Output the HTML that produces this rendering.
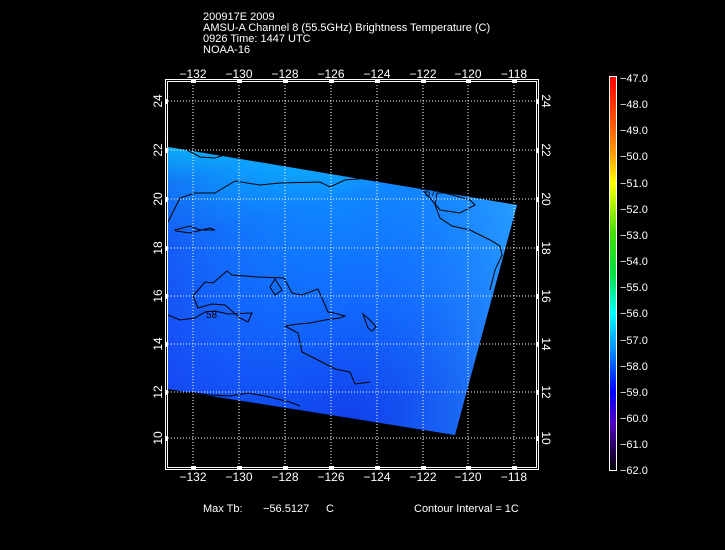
<!DOCTYPE html>
<html><head><meta charset="utf-8"><style>
html,body{margin:0;padding:0;background:#000;}
body{width:725px;height:550px;position:relative;overflow:hidden;font-family:"Liberation Sans",sans-serif;color:#fff;}
.t{position:absolute;font-size:11px;line-height:11px;white-space:pre;}
</style></head><body>
<div class="t" style="left:203px;top:12px">200917E 2009
AMSU-A Channel 8 (55.5GHz) Brightness Temperature (C)
0926 Time: 1447 UTC
NOAA-16</div>
<svg width="725" height="550" style="position:absolute;left:0;top:0" xmlns="http://www.w3.org/2000/svg">
<defs>
<linearGradient id="g1" x1="0" y1="0" x2="0.3" y2="1">
<stop offset="0" stop-color="#00f4ff"/>
<stop offset="0.12" stop-color="#08c0ff"/>
<stop offset="0.3" stop-color="#1088ff"/>
<stop offset="0.65" stop-color="#1268ff"/>
<stop offset="1" stop-color="#1240ec"/>
</linearGradient>
<linearGradient id="g2" x1="0" y1="0" x2="1" y2="0">
<stop offset="0" stop-color="#1a38ee" stop-opacity="0.55"/>
<stop offset="0.5" stop-color="#1070ff" stop-opacity="0"/>
<stop offset="1" stop-color="#30acff" stop-opacity="0.7"/>
</linearGradient>
<radialGradient id="g3" cx="0" cy="0" r="1">
<stop offset="0" stop-color="#00ffff" stop-opacity="0.9"/>
<stop offset="1" stop-color="#00ffff" stop-opacity="0"/>
</radialGradient>
<linearGradient id="cb" x1="0" y1="0" x2="0" y2="1">
<stop offset="0" stop-color="#ff0000"/>
<stop offset="0.13" stop-color="#ff6000"/>
<stop offset="0.2" stop-color="#ffa000"/>
<stop offset="0.27" stop-color="#ffff00"/>
<stop offset="0.4" stop-color="#40e000"/>
<stop offset="0.5" stop-color="#00e040"/>
<stop offset="0.6" stop-color="#00ffff"/>
<stop offset="0.73" stop-color="#0060ff"/>
<stop offset="0.8" stop-color="#0000ff"/>
<stop offset="0.88" stop-color="#5000c0"/>
<stop offset="1" stop-color="#000000"/>
</linearGradient>
<clipPath id="cp"><polygon points="168,147 517,205 455,435 168,389"/></clipPath>
</defs>
<polygon points="168,147 517,205 455,435 168,389" fill="url(#g1)"/>
<polygon points="168,147 517,205 455,435 168,389" fill="url(#g2)"/>
<g clip-path="url(#cp)"><ellipse cx="168" cy="147" rx="120" ry="50" fill="url(#g3)"/></g>
<g fill="none" stroke="#000" stroke-width="1">
<path d="M187,150 L200,157 L215,158 L227,154 L240,157 L245,153"/>
<path d="M168,222 L180,198 L195,193 L215,193 L235,181 L260,185 L280,183 L320,182 L330,187 L345,180 L370,178 L398,180 L420,187 L430,198 L440,210 L460,213 L475,205 L470,200 L445,193 L437,193 L435,205 L440,218 L452,226 L470,230 L490,240 L500,246 L502,255 L495,270 L490,290"/>
<path d="M175,230 L190,226 L200,230 L215,230 L210,228 L190,233 L176,231 Z"/>
<path d="M168,315 L180,320 L195,318 L205,312 L215,311 L228,314 L252,313 L248,322 L240,318 L225,305 L212,304 L198,308 L193,296 L205,282 L213,283 L227,271 L232,275 L258,277 L284,278 L292,293 L302,295 L318,289 L328,312 L334,313 L345,316 L340,318 L325,320 L310,323 L298,324 L285,326 L298,333 L302,352 L318,360 L335,369 L350,372 L355,384 L370,382"/>
<path d="M270,287 L275,279 L282,290 L275,295 Z"/>
<path d="M363,314 L370,320 L376,327 L372,331 L368,328 Z"/>
<path d="M189,392 L210,395 L230,396 L248,393 L265,396 L290,402 L300,406"/>
</g>
<g stroke="#fff" stroke-width="1" stroke-dasharray="1,2" fill="none">
<path d="M193,85V466M239,85V466M285,85V466M331,85V466M377,85V466M423,85V466M468,85V466M514,85V466"/>
<path d="M168,101H536M168,150H536M168,199H536M168,248H536M168,296H536M168,344H536M168,392H536M168,438H536"/>
</g>
<rect x="165.5" y="79.5" width="373" height="390" fill="none" stroke="#fff" stroke-width="1"/>
<rect x="167.5" y="81.5" width="369" height="386" fill="none" stroke="#fff" stroke-width="1"/>
<g fill="#fff">
<rect x="191" y="79" width="5" height="4"/><rect x="237" y="79" width="5" height="4"/><rect x="283" y="79" width="5" height="4"/><rect x="329" y="79" width="5" height="4"/><rect x="375" y="79" width="5" height="4"/><rect x="421" y="79" width="5" height="4"/><rect x="466" y="79" width="5" height="4"/><rect x="512" y="79" width="5" height="4"/>
<rect x="191" y="466" width="5" height="4"/><rect x="237" y="466" width="5" height="4"/><rect x="283" y="466" width="5" height="4"/><rect x="329" y="466" width="5" height="4"/><rect x="375" y="466" width="5" height="4"/><rect x="421" y="466" width="5" height="4"/><rect x="466" y="466" width="5" height="4"/><rect x="512" y="466" width="5" height="4"/>
<rect x="165" y="99" width="3" height="5"/><rect x="165" y="148" width="3" height="5"/><rect x="165" y="197" width="3" height="5"/><rect x="165" y="246" width="3" height="5"/><rect x="165" y="294" width="3" height="5"/><rect x="165" y="342" width="3" height="5"/><rect x="165" y="390" width="3" height="5"/><rect x="165" y="436" width="3" height="5"/>
<rect x="536" y="99" width="3" height="5"/><rect x="536" y="148" width="3" height="5"/><rect x="536" y="197" width="3" height="5"/><rect x="536" y="246" width="3" height="5"/><rect x="536" y="294" width="3" height="5"/><rect x="536" y="342" width="3" height="5"/><rect x="536" y="390" width="3" height="5"/><rect x="536" y="436" width="3" height="5"/>
</g>
<g fill="#fff" font-family="Liberation Sans, sans-serif" font-size="12" text-anchor="middle">
<text x="193" y="78">−132</text><text x="239" y="78">−130</text><text x="285" y="78">−128</text><text x="331" y="78">−126</text><text x="377" y="78">−124</text><text x="423" y="78">−122</text><text x="468" y="78">−120</text><text x="514" y="78">−118</text>
<text x="193" y="481">−132</text><text x="239" y="481">−130</text><text x="285" y="481">−128</text><text x="331" y="481">−126</text><text x="377" y="481">−124</text><text x="423" y="481">−122</text><text x="468" y="481">−120</text><text x="514" y="481">−118</text>
<g transform="rotate(-90)"><text x="-101" y="162">24</text><text x="-150" y="162">22</text><text x="-199" y="162">20</text><text x="-248" y="162">18</text><text x="-296" y="162">16</text><text x="-344" y="162">14</text><text x="-392" y="162">12</text><text x="-438" y="162">10</text></g>
<g transform="rotate(90)"><text x="101" y="-542">24</text><text x="150" y="-542">22</text><text x="199" y="-542">20</text><text x="248" y="-542">18</text><text x="296" y="-542">16</text><text x="344" y="-542">14</text><text x="392" y="-542">12</text><text x="438" y="-542">10</text></g>
</g>
<text x="425" y="196" fill="#000" font-size="10" font-family="Liberation Sans, sans-serif">57</text>
<text x="206" y="318" fill="#000" font-size="10" font-family="Liberation Sans, sans-serif">58</text>
<rect x="609.5" y="76.5" width="7" height="394" fill="url(#cb)" stroke="#fff" stroke-width="1"/>
<g fill="#fff" font-family="Liberation Sans, sans-serif" font-size="11">
<text x="620" y="82">−47.0</text><text x="620" y="108">−48.0</text><text x="620" y="134">−49.0</text><text x="620" y="160">−50.0</text><text x="620" y="187">−51.0</text><text x="620" y="213">−52.0</text><text x="620" y="239">−53.0</text><text x="620" y="265">−54.0</text><text x="620" y="291">−55.0</text><text x="620" y="317">−56.0</text><text x="620" y="344">−57.0</text><text x="620" y="370">−58.0</text><text x="620" y="396">−59.0</text><text x="620" y="422">−60.0</text><text x="620" y="448">−61.0</text><text x="620" y="474">−62.0</text>
<text x="203" y="512">Max Tb:</text><text x="263" y="512">−56.5127</text><text x="326" y="512">C</text>
<text x="414" y="512">Contour Interval = 1C</text>
</g>
</svg>
</body></html>
